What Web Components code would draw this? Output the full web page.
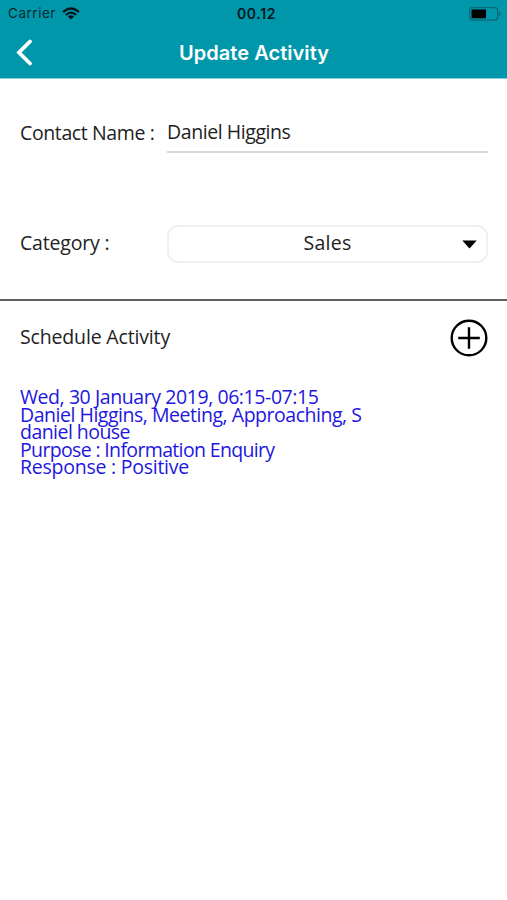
<!DOCTYPE html>
<html lang="en"><head><meta charset="utf-8"><title>Update Activity</title>
<style>
body{margin:0;background:#fff;font-family:"Open Sans","Noto Sans",sans-serif;color:#222}
</style></head><body>
<activity-page></activity-page>
<script>
const define=(name,html,ready)=>customElements.define(name,class extends HTMLElement{
  connectedCallback(){
    if(this.shadowRoot)return;
    this.attachShadow({mode:'open'}).innerHTML=html;
    if(ready)ready.call(this);
  }
});
// A single text line whose tracking is adjusted to span the given width.
define('fit-text',`<style>:host{display:block;white-space:pre}span{display:inline-block}</style><span><slot></slot></span>`,function(){
  const span=this.shadowRoot.querySelector('span');
  const gap=(+this.getAttribute('w')-span.getBoundingClientRect().width)/this.textContent.length;
  span.style.letterSpacing=gap.toFixed(3)+'px';
});
define('status-bar',`<style>
:host{display:grid;grid-template-columns:1fr auto 1fr;align-items:center;height:27px;padding:0 6px 0 8px;font:13.5px/27px Inter,sans-serif;color:#062a30}
.l{display:flex;align-items:center;gap:6px}.t{font-size:14px;font-weight:600;color:#04181c;margin-left:4px}.r{justify-self:end;display:flex}svg{display:block}
</style><div class="l"><fit-text w="48">Carrier</fit-text>
<svg width="18" height="13" viewBox="0 0 18 13" fill="none" stroke="#04181c" stroke-width="2.3"><path d="M1.1 5.2Q9-2.2 16.9 5.2M3.9 8Q9 3.3 14.1 8"/><path d="M9 12.6L5.9 9.6Q9 7 12.1 9.6Z" fill="#04181c" stroke="none"/></svg></div>
<fit-text class="t" w="39">00.12</fit-text>
<div class="r"><svg width="33" height="14" viewBox="0 0 33 14"><rect x="1.6" y=".6" width="28" height="12.6" rx="2.6" fill="none" stroke="#066876" stroke-width="1.2"/><rect x="3.5" y="2.5" width="14.5" height="8.8" rx=".5" fill="#000"/><path d="M30.8 4.8Q32.5 5.2 32.5 6.9T30.8 9Z" fill="#066876"/></svg></div>`);
define('nav-bar',`<style>
:host{display:grid;grid-template-columns:1fr auto 1fr;align-items:center;height:52px;padding:0 15px;color:#fff;font:600 20px/50px Inter,sans-serif}
svg{display:block;margin-top:-3px}fit-text{margin-top:-1px;margin-left:1px}
</style><svg width="18" height="28" viewBox="0 0 18 28" fill="none" stroke="#fff" stroke-width="3.8" stroke-linecap="round" stroke-linejoin="miter"><path d="M15 3.5L4 14.5L15 25.5"/></svg><fit-text w="150">Update Activity</fit-text><span></span>`);
define('app-header',`<style>:host{display:block;height:79px;background:#0097aa;border-bottom:1px solid #86cfda;box-sizing:border-box}</style><status-bar></status-bar><nav-bar></nav-bar>`);
define('form-row',`<style>:host{display:grid;grid-template-columns:147px 1fr;align-items:center;padding:0 19px 0 20px;font-size:19.5px;line-height:26px}::slotted([slot=label]){margin-top:-3px}</style><slot name="label"></slot><slot></slot>`);
define('text-field',`<style>:host{display:block;height:37px;box-sizing:border-box;border-bottom:2px solid #d8d8d8;line-height:32px}</style><slot></slot>`);
define('select-box',`<style>:host{display:grid;grid-template-columns:1fr auto;align-items:center;height:38px;box-sizing:border-box;border:2px solid #f0f0f0;border-radius:11px;padding:0 9px 3px 24px}
.v{justify-self:center}svg{display:block;margin-top:4px}</style><div class="v"><slot></slot></div><svg width="15" height="9" viewBox="0 0 15 9"><path d="M.3.5H14.7L7.5 8.5Z" fill="#000"/></svg>`);
define('add-button',`<style>:host{display:block}svg{display:block}</style><svg width="38" height="38" viewBox="0 0 38 38" fill="none" stroke="#000" stroke-width="2.4"><circle cx="19" cy="19" r="17.3"/><path d="M19 8.2V29.8M8.2 19H29.8"/></svg>`);
define('section-head',`<style>:host{display:flex;justify-content:space-between;align-items:center;height:76px;box-sizing:border-box;border-top:2px solid #606060;padding:0 19px 0 20px;font-size:19.5px;line-height:26px}fit-text{margin-top:-3px}</style><fit-text w="150">Schedule Activity</fit-text><add-button></add-button>`);
define('activity-item',`<style>:host{display:block;padding:13px 20px;font-size:19.5px;line-height:17.5px;color:#2216e0}</style><slot></slot>`);
define('activity-page',`<style>
:host{display:block;height:900px;background:#fff;overflow:hidden}
.name{margin-top:37px}.cat{margin-top:72px}section-head{margin-top:36px}
</style>
<app-header></app-header>
<form-row class="name"><fit-text slot="label" w="134.5">Contact Name :</fit-text><text-field><fit-text w="123.5">Daniel Higgins</fit-text></text-field></form-row>
<form-row class="cat"><fit-text slot="label" w="89.5">Category :</fit-text><select-box><fit-text w="48">Sales</fit-text></select-box></form-row>
<section-head></section-head>
<activity-item><fit-text w="298.5">Wed, 30 January 2019, 06:15-07:15</fit-text><fit-text w="341.5">Daniel Higgins, Meeting, Approaching, S</fit-text><fit-text w="110">daniel house</fit-text><fit-text w="254.5">Purpose : Information Enquiry</fit-text><fit-text w="169">Response : Positive</fit-text></activity-item>`);
</script></body></html>
